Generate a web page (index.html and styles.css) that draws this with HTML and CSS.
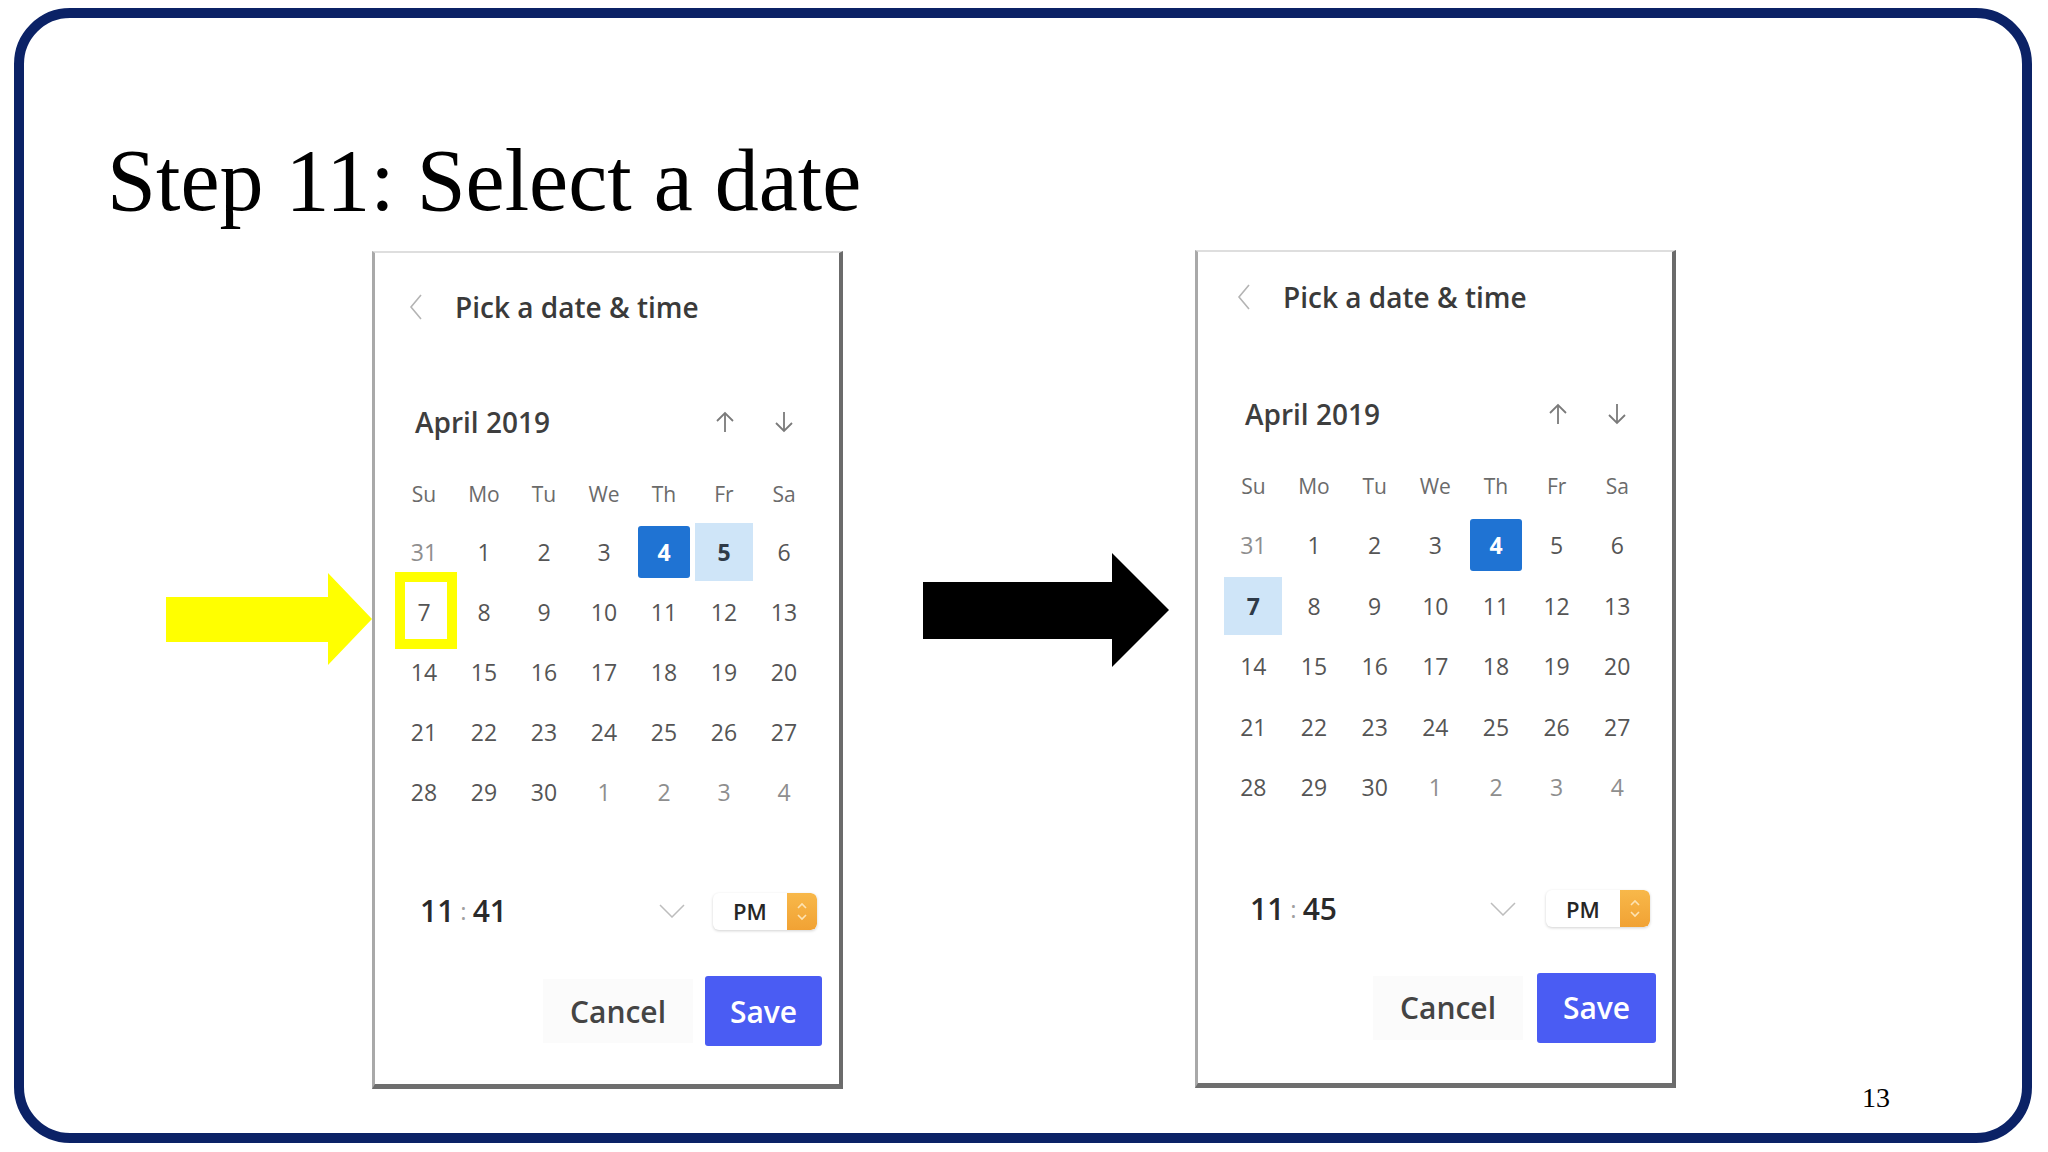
FILE: index.html
```html
<!DOCTYPE html>
<html lang="en">
<head>
<meta charset="utf-8">
<title>Step 11: Select a date</title>
<link rel="stylesheet" href="styles.css">
</head>
<body>
<div class="slide">
  <h1 class="title">Step 11: Select a date</h1>
  <div class="stage">
    <svg class="arrow-yellow" width="206" height="92" viewBox="0 0 206 92"><polygon points="0,24 162,24 162,0 206,46 162,92 162,69 0,69" fill="#ffff00"/></svg>

    <div class="panel panel-a">
      <div class="head">
        <svg class="back" width="14" height="26" viewBox="0 0 14 26"><polyline points="12,1 2,13 12,25" fill="none" stroke="#b4b4b4" stroke-width="1.6"/></svg>
        <span class="head-title">Pick a date &amp; time</span>
      </div>
      <div class="month">
        <span class="month-name">April 2019</span>
        <div class="nav">
          <svg width="22" height="22" viewBox="0 0 22 22"><line x1="11" y1="2" x2="11" y2="21" stroke="#7a7a7a" stroke-width="1.8"/><polyline points="3,10 11,2 19,10" fill="none" stroke="#7a7a7a" stroke-width="1.8"/></svg>
          <svg width="22" height="22" viewBox="0 0 22 22"><line x1="11" y1="1" x2="11" y2="20" stroke="#7a7a7a" stroke-width="1.8"/><polyline points="3,12 11,20 19,12" fill="none" stroke="#7a7a7a" stroke-width="1.8"/></svg>
        </div>
      </div>
      <div class="grid">
        <span class="wk">Su</span><span class="wk">Mo</span><span class="wk">Tu</span><span class="wk">We</span><span class="wk">Th</span><span class="wk">Fr</span><span class="wk">Sa</span>
        <span class="day out">31</span><span class="day">1</span><span class="day">2</span><span class="day">3</span><span class="day"><b class="sel">4</b></span><span class="day"><b class="hov">5</b></span><span class="day">6</span>
        <span class="day mark">7</span><span class="day">8</span><span class="day">9</span><span class="day">10</span><span class="day">11</span><span class="day">12</span><span class="day">13</span>
        <span class="day">14</span><span class="day">15</span><span class="day">16</span><span class="day">17</span><span class="day">18</span><span class="day">19</span><span class="day">20</span>
        <span class="day">21</span><span class="day">22</span><span class="day">23</span><span class="day">24</span><span class="day">25</span><span class="day">26</span><span class="day">27</span>
        <span class="day">28</span><span class="day">29</span><span class="day">30</span><span class="day out">1</span><span class="day out">2</span><span class="day out">3</span><span class="day out">4</span>
      </div>
      <div class="time-row">
        <span class="time">11<span class="colon">:</span>41</span>
        <svg class="drop" width="26" height="14" viewBox="0 0 26 14"><polyline points="1,1 13,13 25,1" fill="none" stroke="#bdbdbd" stroke-width="1.5"/></svg>
        <div class="ampm"><span class="ampm-text">PM</span><span class="stepper"><svg width="30" height="37" viewBox="0 0 30 37"><polyline points="11,15 15,11 19,15" fill="none" stroke="#fde3b3" stroke-width="1.6"/><polyline points="11,22 15,26 19,22" fill="none" stroke="#fde3b3" stroke-width="1.6"/></svg></span></div>
      </div>
      <div class="btn-row">
        <span class="btn-cancel">Cancel</span>
        <span class="btn-save">Save</span>
      </div>
    </div>

    <svg class="arrow-black" width="246" height="114" viewBox="0 0 246 114"><polygon points="0,29 189,29 189,0 246,57 189,114 189,86 0,86" fill="#000"/></svg>

    <div class="panel panel-b">
      <div class="head">
        <svg class="back" width="14" height="26" viewBox="0 0 14 26"><polyline points="12,1 2,13 12,25" fill="none" stroke="#b4b4b4" stroke-width="1.6"/></svg>
        <span class="head-title">Pick a date &amp; time</span>
      </div>
      <div class="month">
        <span class="month-name">April 2019</span>
        <div class="nav">
          <svg width="22" height="22" viewBox="0 0 22 22"><line x1="11" y1="2" x2="11" y2="21" stroke="#7a7a7a" stroke-width="1.8"/><polyline points="3,10 11,2 19,10" fill="none" stroke="#7a7a7a" stroke-width="1.8"/></svg>
          <svg width="22" height="22" viewBox="0 0 22 22"><line x1="11" y1="1" x2="11" y2="20" stroke="#7a7a7a" stroke-width="1.8"/><polyline points="3,12 11,20 19,12" fill="none" stroke="#7a7a7a" stroke-width="1.8"/></svg>
        </div>
      </div>
      <div class="grid">
        <span class="wk">Su</span><span class="wk">Mo</span><span class="wk">Tu</span><span class="wk">We</span><span class="wk">Th</span><span class="wk">Fr</span><span class="wk">Sa</span>
        <span class="day out">31</span><span class="day">1</span><span class="day">2</span><span class="day">3</span><span class="day"><b class="sel">4</b></span><span class="day">5</span><span class="day">6</span>
        <span class="day"><b class="hov">7</b></span><span class="day">8</span><span class="day">9</span><span class="day">10</span><span class="day">11</span><span class="day">12</span><span class="day">13</span>
        <span class="day">14</span><span class="day">15</span><span class="day">16</span><span class="day">17</span><span class="day">18</span><span class="day">19</span><span class="day">20</span>
        <span class="day">21</span><span class="day">22</span><span class="day">23</span><span class="day">24</span><span class="day">25</span><span class="day">26</span><span class="day">27</span>
        <span class="day">28</span><span class="day">29</span><span class="day">30</span><span class="day out">1</span><span class="day out">2</span><span class="day out">3</span><span class="day out">4</span>
      </div>
      <div class="time-row">
        <span class="time">11<span class="colon">:</span>45</span>
        <svg class="drop" width="26" height="14" viewBox="0 0 26 14"><polyline points="1,1 13,13 25,1" fill="none" stroke="#bdbdbd" stroke-width="1.5"/></svg>
        <div class="ampm"><span class="ampm-text">PM</span><span class="stepper"><svg width="30" height="37" viewBox="0 0 30 37"><polyline points="11,15 15,11 19,15" fill="none" stroke="#fde3b3" stroke-width="1.6"/><polyline points="11,22 15,26 19,22" fill="none" stroke="#fde3b3" stroke-width="1.6"/></svg></span></div>
      </div>
      <div class="btn-row">
        <span class="btn-cancel">Cancel</span>
        <span class="btn-save">Save</span>
      </div>
    </div>
  </div>
  <div class="page-num">13</div>
</div>
</body>
</html>
```

FILE: styles.css
```css
*, *::before, *::after { box-sizing: border-box; }

html, body {
  margin: 0;
  padding: 0;
  background: #ffffff;
}

body {
  width: 2048px;
  height: 1152px;
  overflow: hidden;
}

.slide {
  position: relative;
  margin: 8px 0 0 14px;
  width: 2018px;
  height: 1135px;
  border: 10px solid #0b2266;
  border-radius: 56px;
  background: #ffffff;
}

.title {
  margin: 0;
  padding: 119px 0 0 83px;
  font-family: "Liberation Serif", "Times New Roman", serif;
  font-weight: 400;
  font-size: 88px;
  line-height: 88px;
  color: #000000;
  white-space: nowrap;
}

.stage {
  display: flex;
  align-items: flex-start;
  margin-top: 26px;
  padding-left: 142px;
}

.arrow-yellow {
  flex: none;
  margin-top: 322px;
  display: block;
}

.arrow-black {
  flex: none;
  margin-top: 302px;
  margin-left: 80px;
  display: block;
}

/* ---------- date picker panel ---------- */
.panel {
  --w: 471px;
  --head-top: 36px;
  --head-pad: 34px;
  --head-gap: 32px;
  --month-top: 79px;
  --month-pad: 40px;
  --month-pad-r: 44px;
  --nav-gap: 37px;
  --grid-top: 26px;
  --grid-left: 19px;
  --col: 60px;
  --wk-h: 56px;
  --row-h: 60px;
  --time-top: 69px;
  --time-pad: 45px;
  --time-gap: 28px;
  --btn-top: 45px;
  --btn-pad-r: 17px;
  --btn-gap: 12px;
  --cancel-w: 150px;
  --save-w: 117px;

  flex: none;
  width: var(--w);
  height: 838px;
  display: flex;
  flex-direction: column;
  background: #ffffff;
  border-style: solid;
  border-width: 2px 4px 5px 3px;
  border-color: #dedede #6b6b6b #6e6e6e #a9a9a9;
  font-family: "Open Sans", "Noto Sans", "DejaVu Sans", sans-serif;
  color: #4f4f4f;
}

.panel-b {
  --w: 481px;
  --head-top: 27px;
  --head-pad: 39px;
  --head-gap: 32px;
  --month-top: 81px;
  --month-pad: 47px;
  --month-pad-r: 44px;
  --grid-top: 25px;
  --grid-left: 25px;
  --col: 60.67px;
  --wk-h: 58px;
  --row-h: 60.5px;
  --time-top: 71px;
  --time-pad: 52px;
  --time-gap: 30px;
  --btn-top: 44px;
  --btn-pad-r: 16px;
  --btn-gap: 14px;
  --cancel-w: 150px;
  --save-w: 119px;
  margin-left: 26px;
  margin-top: -1px;
}

.head {
  display: flex;
  align-items: center;
  height: 36px;
  margin-top: var(--head-top);
  padding-left: var(--head-pad);
  gap: var(--head-gap);
}

.back { display: block; flex: none; }

.head-title {
  font-size: 28px;
  line-height: 36px;
  font-weight: 600;
  color: #3a3a3a;
  white-space: nowrap;
}

.month {
  display: flex;
  align-items: center;
  justify-content: space-between;
  height: 36px;
  margin-top: var(--month-top);
  padding-left: var(--month-pad);
  padding-right: var(--month-pad-r);
}

.month-name {
  font-size: 28px;
  line-height: 36px;
  font-weight: 600;
  color: #3e3e3e;
}

.nav {
  display: flex;
  gap: var(--nav-gap);
}

.nav svg { display: block; }

.grid {
  display: grid;
  grid-template-columns: repeat(7, var(--col));
  grid-template-rows: var(--wk-h) repeat(5, var(--row-h));
  margin-top: var(--grid-top);
  margin-left: var(--grid-left);
}

.wk, .day {
  display: flex;
  align-items: center;
  justify-content: center;
  position: relative;
}

.wk {
  font-size: 21px;
  color: #6b6b6b;
}

.day {
  font-size: 23px;
  color: #555555;
}

.day.out { color: #8e8e8e; }

.sel {
  display: flex;
  align-items: center;
  justify-content: center;
  width: 52px;
  height: 52px;
  border-radius: 3px;
  background: #1f73d3;
  color: #ffffff;
  font-weight: 700;
}

.hov {
  display: flex;
  align-items: center;
  justify-content: center;
  width: 58px;
  height: 58px;
  background: #cfe5f8;
  color: #2e3a48;
  font-weight: 700;
}

.mark::after {
  content: "";
  position: absolute;
  left: 1px;
  top: -10px;
  width: 62px;
  height: 77px;
  border: 10px solid #ffff00;
}

.time-row {
  display: flex;
  align-items: center;
  height: 40px;
  margin-top: var(--time-top);
  padding-left: var(--time-pad);
  padding-right: 22px;
}

.time {
  flex: 1;
  font-size: 30px;
  line-height: 40px;
  font-weight: 600;
  color: #2a2a2a;
}

.colon {
  display: inline-block;
  margin: 0 6px;
  font-size: 24px;
  font-weight: 400;
  color: #a0a0a0;
  vertical-align: 2px;
}

.drop { display: block; flex: none; margin-right: var(--time-gap); }

.ampm {
  flex: none;
  display: flex;
  width: 104px;
  height: 37px;
  border-radius: 6px;
  background: #ffffff;
  box-shadow: 0 1px 3px rgba(0, 0, 0, 0.18);
  overflow: hidden;
}

.ampm-text {
  flex: 1;
  display: flex;
  align-items: center;
  justify-content: center;
  font-size: 22px;
  font-weight: 600;
  color: #262626;
}

.stepper {
  flex: none;
  width: 30px;
  background: linear-gradient(#f8b84a, #f1a234);
  border-radius: 0 6px 6px 0;
}

.stepper svg { display: block; }

.btn-row {
  display: flex;
  align-items: center;
  justify-content: flex-end;
  gap: var(--btn-gap);
  height: 70px;
  margin-top: var(--btn-top);
  padding-right: var(--btn-pad-r);
}

.btn-cancel {
  display: flex;
  align-items: center;
  justify-content: center;
  width: var(--cancel-w);
  height: 64px;
  background: #fbfbfb;
  font-size: 30px;
  font-weight: 600;
  color: #444444;
}

.btn-save {
  display: flex;
  align-items: center;
  justify-content: center;
  width: var(--save-w);
  height: 70px;
  border-radius: 3px;
  background: #4a5cf3;
  font-size: 30px;
  font-weight: 600;
  color: #ffffff;
}

.page-num {
  position: absolute;
  right: 132px;
  bottom: 21px;
  font-family: "Liberation Serif", "Times New Roman", serif;
  font-size: 28px;
  line-height: 28px;
  color: #000000;
}
```
